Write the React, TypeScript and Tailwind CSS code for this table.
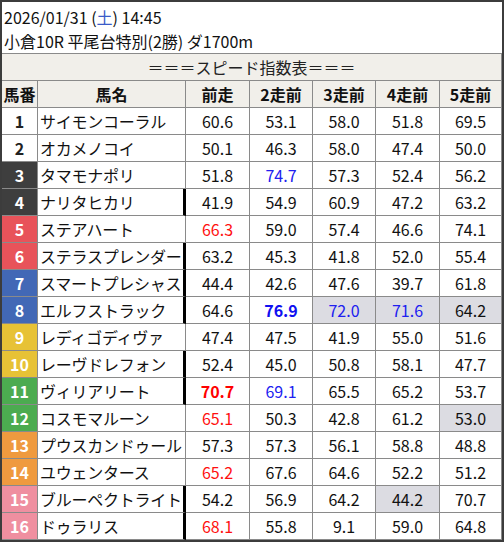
import React from "react";

type Cell = { v: string; c?: "r" | "b" | "R" | "B"; g?: boolean };
type Row = { n: number; name: string; bar: boolean; cells: Cell[] };

const P = (s: string): Cell => {
  const m = s.match(/^([0-9.]+)([rRbB]?)(g?)$/);
  if (!m) return { v: s };
  return { v: m[1], c: (m[2] || undefined) as Cell["c"], g: m[3] === "g" };
};

const raw: [number, string, boolean, string[]][] = [
  [1, "サイモンコーラル", false, ["60.6", "53.1", "58.0", "51.8", "69.5"]],
  [2, "オカメノコイ", false, ["50.1", "46.3", "58.0", "47.4", "50.0"]],
  [3, "タマモナポリ", false, ["51.8", "74.7b", "57.3", "52.4", "56.2"]],
  [4, "ナリタヒカリ", true, ["41.9", "54.9", "60.9", "47.2", "63.2"]],
  [5, "ステアハート", false, ["66.3r", "59.0", "57.4", "46.6", "74.1"]],
  [6, "ステラスプレンダー", true, ["63.2", "45.3", "41.8", "52.0", "55.4"]],
  [7, "スマートプレシャス", true, ["44.4", "42.6", "47.6", "39.7", "61.8"]],
  [8, "エルフストラック", true, ["64.6", "76.9B", "72.0bg", "71.6bg", "64.2g"]],
  [9, "レディゴディヴァ", false, ["47.4", "47.5", "41.9", "55.0", "51.6"]],
  [10, "レーヴドレフォン", true, ["52.4", "45.0", "50.8", "58.1", "47.7"]],
  [11, "ヴィリアリート", true, ["70.7R", "69.1b", "65.5", "65.2", "53.7"]],
  [12, "コスモマルーン", false, ["65.1r", "50.3", "42.8", "61.2", "53.0g"]],
  [13, "プウスカンドゥール", false, ["57.3", "57.3", "56.1", "58.8", "48.8"]],
  [14, "ユウェンタース", false, ["65.2r", "67.6", "64.6", "52.2", "51.2"]],
  [15, "ブルーペクトライト", true, ["54.2", "56.9", "64.2", "44.2g", "70.7"]],
  [16, "ドゥラリス", true, ["68.1r", "55.8", "9.1", "59.0", "64.8"]],
];

const rows: Row[] = raw.map(([n, name, bar, cs]) => ({ n, name, bar, cells: cs.map(P) }));

const frameClass = (n: number) => {
  if (n <= 2) return "bg-white text-[#222]";
  if (n <= 4) return "bg-[#3e3e3e] text-white";
  if (n <= 6) return "bg-[#e8535a] text-white";
  if (n <= 8) return "bg-[#4268b6] text-white";
  if (n <= 10) return "bg-[#e7c236] text-white";
  if (n <= 12) return "bg-[#4cab50] text-white";
  if (n <= 14) return "bg-[#ef9a3f] text-white";
  return "bg-[#ef8fa0] text-white";
};

const colorClass = (c?: Cell["c"]) => {
  switch (c) {
    case "r":
      return "text-[#ff1010]";
    case "R":
      return "text-[#ff0000] font-bold";
    case "b":
      return "text-[#2020f0]";
    case "B":
      return "text-[#1010f0] font-bold";
    default:
      return "text-[#111]";
  }
};

const gridCols = "grid grid-cols-[36px_148px_64px_63px_63px_64px_62px]";
const cellBase = "h-[27px] border-r border-b border-[#8a8a8a] flex items-center";

export default function App() {
  return (
    <div
      className="w-[504px] h-[542px] border-2 border-[#3c3c3c] bg-white overflow-hidden text-[16px] leading-none"
      style={{ fontFamily: '"Noto Sans CJK JP", "Noto Sans", sans-serif' }}
    >
      <div className="h-[52px] border-b border-[#8a8a8a] bg-white pl-[2px] pt-[3px] text-[#111]">
        <div className="h-[24px] flex items-center">
          2026/01/31 (<span className="text-[#3a5bc8]">土</span>) 14:45
        </div>
        <div className="h-[24px] flex items-center">小倉10R 平尾台特別(2勝) ダ1700m</div>
      </div>
      <div className="h-[27px] border-b border-r border-[#8a8a8a] bg-[#f1efea] flex items-center justify-center text-[#222]">
        ＝＝＝スピード指数表＝＝＝
      </div>
      <div className={`${gridCols} bg-[#f1efea] font-bold text-[#111]`}>
        {["馬番", "馬名", "前走", "2走前", "3走前", "4走前", "5走前"].map((h) => (
          <div key={h} className={`${cellBase} justify-center`}>
            {h}
          </div>
        ))}
      </div>
      {rows.map((r) => (
        <div key={r.n} className={gridCols}>
          <div className={`${cellBase} justify-center font-bold ${frameClass(r.n)}`}>{r.n}</div>
          <div
            className={`${cellBase} pl-[2px] text-[#111] whitespace-nowrap overflow-hidden tracking-[-0.25px] ${r.bar ? "border-r-[3px] border-r-black" : ""}`}
          >
            {r.name}
          </div>
          {r.cells.map((c, i) => (
            <div
              key={i}
              className={`${cellBase} justify-center ${c.g ? "bg-[#dcdce2]" : "bg-white"} ${colorClass(c.c)}`}
            >
              {c.v}
            </div>
          ))}
        </div>
      ))}
    </div>
  );
}
